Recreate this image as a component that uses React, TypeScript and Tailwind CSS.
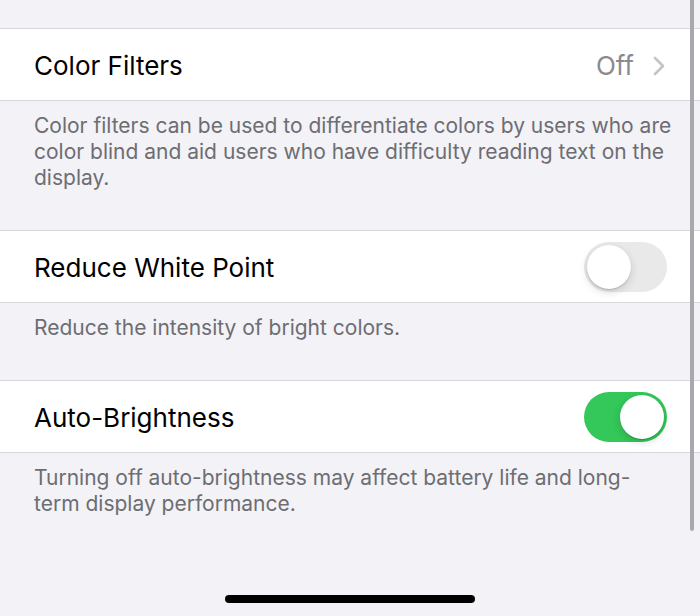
const Toggle = ({ on }: { on: boolean }) => (
  <div
    className={`relative h-[50px] w-[83px] rounded-full ${on ? "bg-[#34c759]" : "bg-[#e9e9ea]"}`}
  >
    <div
      className={`absolute top-[3px] h-[44px] w-[44px] rounded-full bg-white shadow-[0_3px_8px_rgba(0,0,0,0.15),0_1px_1px_rgba(0,0,0,0.16)] ${on ? "right-[3px]" : "left-[3px]"}`}
    />
  </div>
);

const Row = ({ title, children }: { title: string; children: React.ReactNode }) => (
  <div className="flex h-[73px] items-center justify-between border-y border-[#d8d8dc] bg-white pl-[34px] pr-[33px]">
    <span className="pt-[2px] text-[26px] text-black">{title}</span>
    {children}
  </div>
);

const Note = ({ children }: { children: React.ReactNode }) => (
  <p className="whitespace-nowrap px-[34px] pt-3 pb-[39px] text-[21px] leading-[26px] text-[#6d6d72]">
    {children}
  </p>
);

export default function App() {
  return (
    <div
      className="relative flex h-[616px] flex-col overflow-hidden bg-[#f2f2f7] pt-[28px]"
      style={{ fontFamily: "Inter, 'Noto Sans', sans-serif" }}
    >
      <Row title="Color Filters">
        <div className="flex items-center gap-[19px] pr-[2px] pt-[2px]">
          <span className="text-[26px] text-[#8a8a8e]">Off</span>
          <svg width="12" height="20" viewBox="0 0 12 20" fill="none">
            <path d="M2 2l8 8-8 8" stroke="#c4c4c7" strokeWidth="2.6" strokeLinecap="round" strokeLinejoin="round" />
          </svg>
        </div>
      </Row>
      <Note>
        Color filters can be used to differentiate colors by users who are
        <br />
        color blind and aid users who have difficulty reading text on the
        <br />
        display.
      </Note>

      <Row title="Reduce White Point">
        <Toggle on={false} />
      </Row>
      <Note>Reduce the intensity of bright colors.</Note>

      <Row title="Auto-Brightness">
        <Toggle on />
      </Row>
      <Note>
        Turning off auto-brightness may affect battery life and long-
        <br />
        term display performance.
      </Note>

      <div className="mx-auto mt-auto mb-[13px] h-[8px] w-[250px] rounded-full bg-black" />

      {/* scroll indicator */}
      <div className="absolute top-0 right-[6px] h-[531px] w-[4px] rounded-b-full bg-[#a9a9ad]" />
    </div>
  );
}
